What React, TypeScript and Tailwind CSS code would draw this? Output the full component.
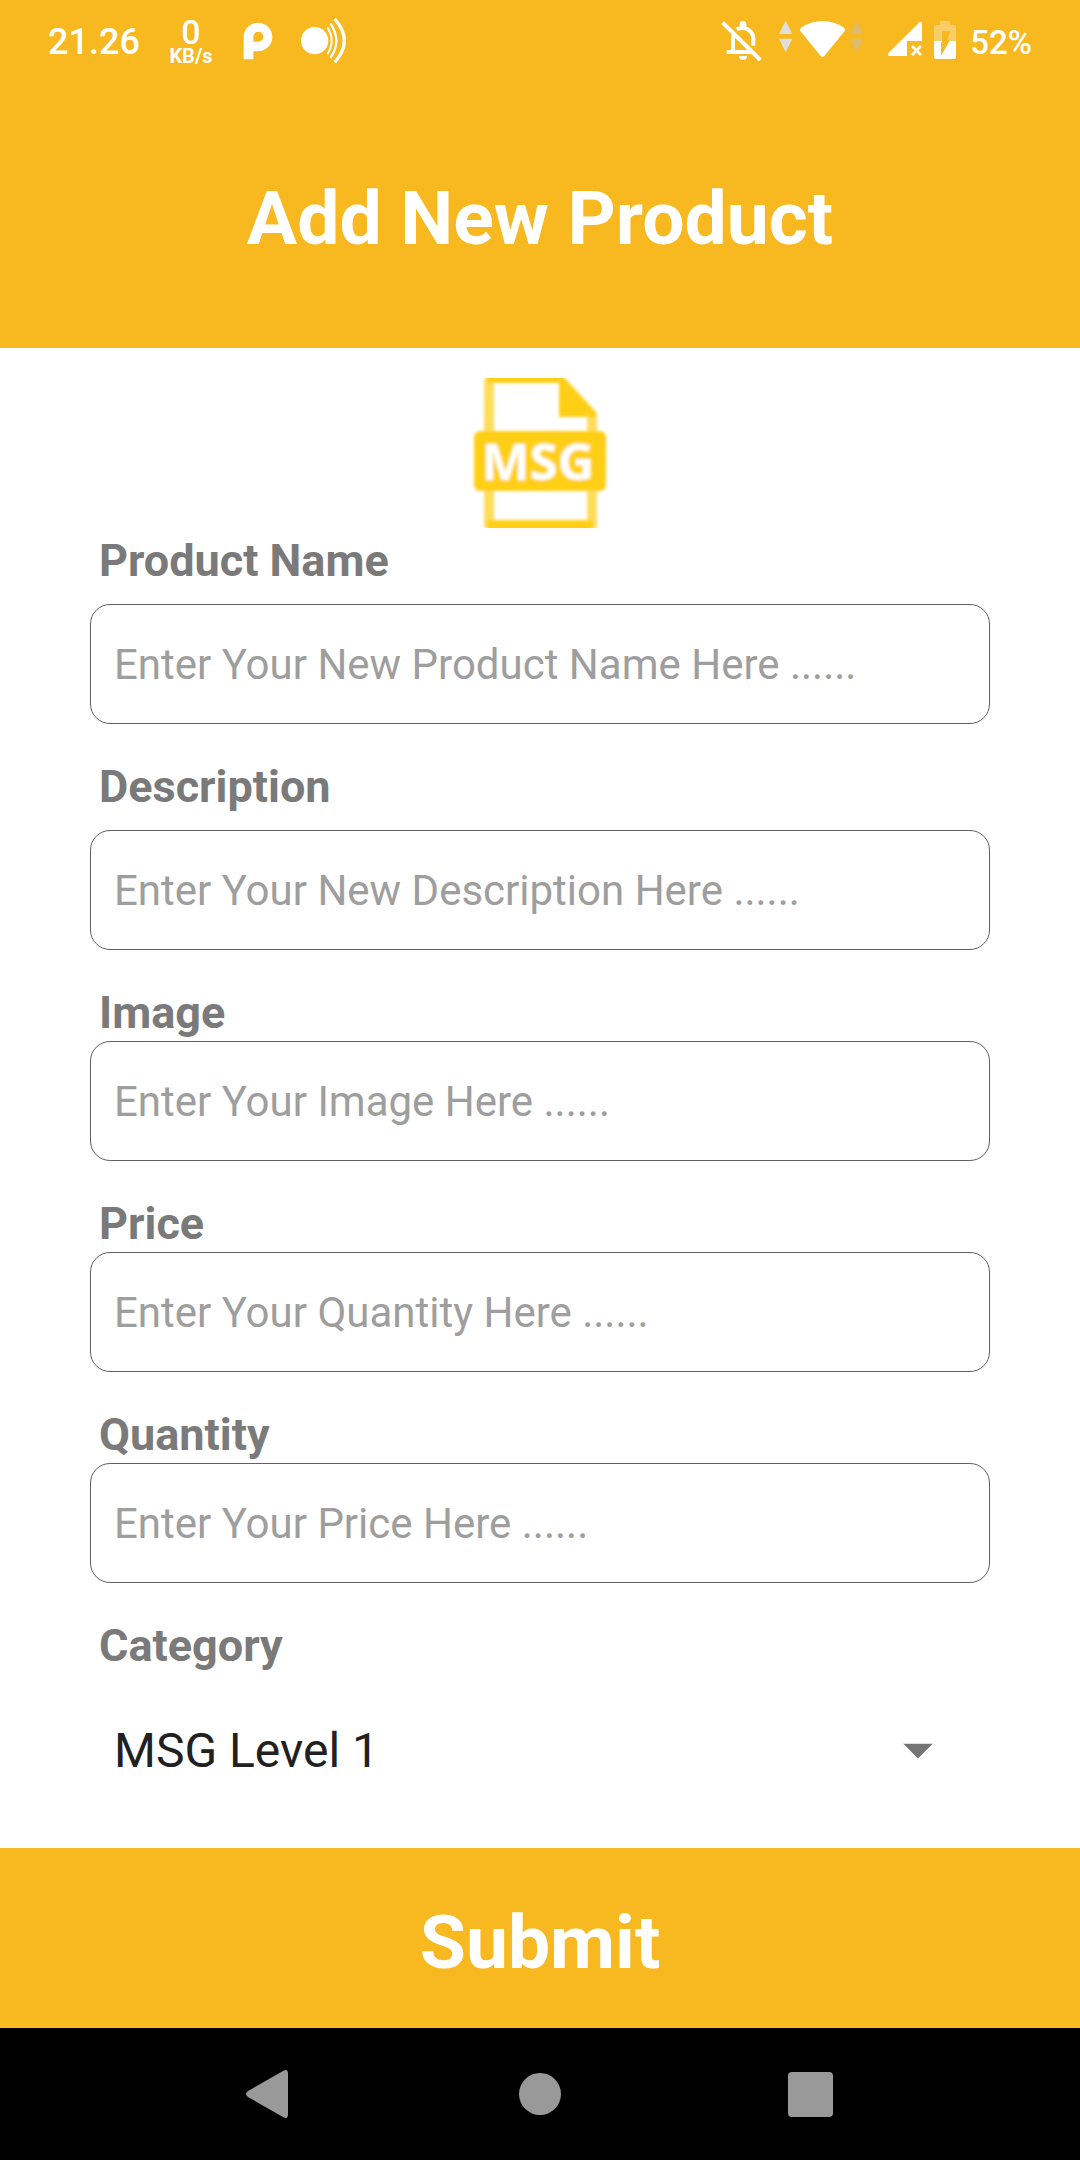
import React, { useState } from "react";

type FieldProps = {
  id: string;
  label: string;
  placeholder: string;
  spaced?: boolean;
};

function Field({ id, label, placeholder, spaced = false }: FieldProps) {
  return (
    <div className={spaced ? "flex flex-col gap-[15px]" : "flex flex-col"}>
      <label htmlFor={id} className="pl-[9px] text-[45px] leading-[56px] font-bold text-[#7a7a7a]">
        {label}
      </label>
      <input
        id={id}
        type="text"
        placeholder={placeholder}
        className="h-[120px] w-full rounded-[20px] border border-[#606060] bg-white px-[23px] text-[42px] text-[#212121] placeholder:text-[#9e9e9e]"
      />
    </div>
  );
}

function StatusBar() {
  return (
    <div className="flex h-[88px] items-start justify-between pt-[18px] pr-[48px] pl-[48px] text-white">
      <div className="flex h-[45px] items-center">
        <span className="w-[121px] pt-1 text-[36px] leading-[45px] font-medium">21.26</span>
        <span className="flex w-[44px] flex-col items-center pt-1">
          <span className="text-[34px] leading-[27px] font-medium">0</span>
          <span className="text-[20px] leading-[20px] font-bold">KB/s</span>
        </span>
        <svg viewBox="729 54 90 135" className="ml-[30px] h-[45px] w-[30px]" aria-hidden="true">
          <path
            fill="#fff"
            fillRule="evenodd"
            d="M731 178V112A43 43 0 1 1 774 154H760V178ZM760 125V110A15 15 0 1 1 775 125Z"
          />
        </svg>
        <svg viewBox="900 54 138 135" className="ml-[27px] h-[45px] w-[46px]" aria-hidden="true">
          <circle cx="944" cy="122" r="41" fill="#fff" />
          <g fill="none" stroke="#fff">
            <path strokeWidth="6" d="M982 82Q1008 122 982 163" />
            <path strokeWidth="7" d="M991 70Q1027 122 991 174" />
            <path strokeWidth="10" d="M1004 57Q1062 122 1004 187" />
          </g>
        </svg>
      </div>
      <div className="flex h-[45px] items-center">
        <svg viewBox="63 54 123 135" className="h-[45px] w-[41px]" aria-hidden="true">
          <g fill="none" stroke="#fff" strokeWidth="12">
            <path d="M68 68L181 180" />
            <path d="M80 156H157" />
            <path d="M99 156V118Q99 105 104 98" />
            <path d="M110 88C134 76 160 92 160 118V137" />
          </g>
          <path fill="#fff" d="M119 84V73A10 10 0 0 1 139 73V84ZM117 168H141A12 12 0 0 1 117 168Z" />
        </svg>
        <svg viewBox="234 54 258 135" className="ml-[16px] h-[45px] w-[86px]" aria-hidden="true">
          <path fill="#e0dfdc" d="M257 62L277 102H237ZM237 116H277L257 157Z" />
          <path
            fill="#fff"
            d="M301 93Q297 87 303 83Q332 63 368 63Q403 63 432 83Q438 87 434 93L373 168Q368 174 362 168Z"
          />
          <path fill="#dcbb6b" d="M470 62L490 102H450ZM450 116H490L470 157Z" />
        </svg>
        <svg viewBox="561 54 108 135" className="ml-[23px] h-[45px] w-[36px]" aria-hidden="true">
          <path fill="#fff" d="M568 168Q561 165 565 159L658 67Q666 63 666 71V123H621V168Z" />
          <path fill="none" stroke="#fff" strokeWidth="8" d="M636 138L663 165M663 138L636 165" />
        </svg>
        <svg viewBox="699 54 72 135" className="ml-[10px] h-[45px] w-[24px]" aria-hidden="true">
          <path
            fill="#f9ce68"
            d="M720 63H750V75H762Q768 75 768 81V123H741L750 94H726V123H702V81Q702 75 708 75H720Z"
          />
          <path
            fill="#fff"
            d="M702 123H733V127H723V166L748 123H768V171Q768 177 762 177H708Q702 177 702 171Z"
          />
          <path fill="#f7b820" d="M726 94H751L739 119H750L723 167V132H726Z" />
        </svg>
        <span className="ml-[13px] pt-1 text-[33px] leading-[45px] font-medium">52%</span>
      </div>
    </div>
  );
}

function MsgFileLogo() {
  return (
    <svg viewBox="0 0 150 150" className="mx-auto h-[150px] w-[150px]" role="img" aria-label="MSG file">
      <defs>
        <filter id="soften" x="-5%" y="-5%" width="110%" height="110%">
          <feGaussianBlur stdDeviation="1.7" />
        </filter>
      </defs>
      <g filter="url(#soften)">
        <path fill="#ffdd5c" d="M19 0H29V150H19ZM122 34H132V150H122Z" />
        <path fill="#ffcf17" d="M22 -4H96L131 34V39H94V5H22ZM22 142H128V154H22Z" />
        <rect x="9" y="53" width="132" height="60" rx="6" fill="#ffcf17" />
        <text
          x="73"
          y="102"
          textAnchor="middle"
          fill="#fff"
          fontFamily="'Open Sans', sans-serif"
          fontWeight="700"
          fontSize="51"
        >
          MSG
        </text>
      </g>
    </svg>
  );
}

function NavigationBar() {
  return (
    <nav className="grid h-[132px] grid-cols-3 items-center bg-black px-[12.5%]">
      <button type="button" aria-label="Back" className="flex justify-center">
        <svg viewBox="0 0 48 48" className="h-[48px] w-[48px]" aria-hidden="true">
          <path fill="#999" d="M37 1Q42 -2 42 4V44Q42 50 37 47L2 27Q-2 24 2 21Z" />
        </svg>
      </button>
      <button type="button" aria-label="Home" className="flex justify-center">
        <span className="h-[42px] w-[42px] rounded-full bg-[#999]" />
      </button>
      <button type="button" aria-label="Recent apps" className="flex justify-center">
        <span className="h-[45px] w-[45px] rounded-[4px] bg-[#999]" />
      </button>
    </nav>
  );
}

export default function App() {
  const [category, setCategory] = useState("MSG Level 1");

  return (
    <div className="flex min-h-screen flex-col bg-white font-[Roboto,sans-serif]">
      <header className="bg-[#f7b820]">
        <StatusBar />
        <h1 className="flex h-[260px] items-center justify-center text-[75px] leading-[90px] font-bold text-white">
          Add New Product
        </h1>
      </header>

      <form className="flex flex-1 flex-col" onSubmit={(e) => e.preventDefault()}>
        <div className="flex-1 px-[90px] pt-[30px]">
          <MsgFileLogo />
          <div className="mt-[5px] flex flex-col gap-[35px]">
            <Field id="name" label="Product Name" placeholder="Enter Your New Product Name Here ......" spaced />
            <Field id="description" label="Description" placeholder="Enter Your New Description Here ......" spaced />
            <Field id="image" label="Image" placeholder="Enter Your Image Here ......" />
            <Field id="price" label="Price" placeholder="Enter Your Quantity Here ......" />
            <Field id="quantity" label="Quantity" placeholder="Enter Your Price Here ......" />
            <div className="flex flex-col gap-[17px]">
              <label htmlFor="category" className="pl-[9px] text-[45px] leading-[56px] font-bold text-[#7a7a7a]">
                Category
              </label>
              <div className="relative">
                <select
                  id="category"
                  value={category}
                  onChange={(e) => setCategory(e.target.value)}
                  className="h-[120px] w-full appearance-none bg-white px-[24px] text-[48px] text-[#212121]"
                >
                  <option>MSG Level 1</option>
                  <option>MSG Level 2</option>
                  <option>MSG Level 3</option>
                </select>
                <svg
                  viewBox="0 0 30 15"
                  className="pointer-events-none absolute top-1/2 right-[57px] h-[15px] w-[30px] -translate-y-1/2"
                  aria-hidden="true"
                >
                  <path fill="#757575" d="M0 0H30L15 15Z" />
                </svg>
              </div>
            </div>
          </div>
        </div>
        <button
          type="submit"
          className="h-[180px] w-full bg-[#f7b820] pt-2 text-[75px] leading-[90px] font-bold text-white"
        >
          Submit
        </button>
      </form>

      <NavigationBar />
    </div>
  );
}
